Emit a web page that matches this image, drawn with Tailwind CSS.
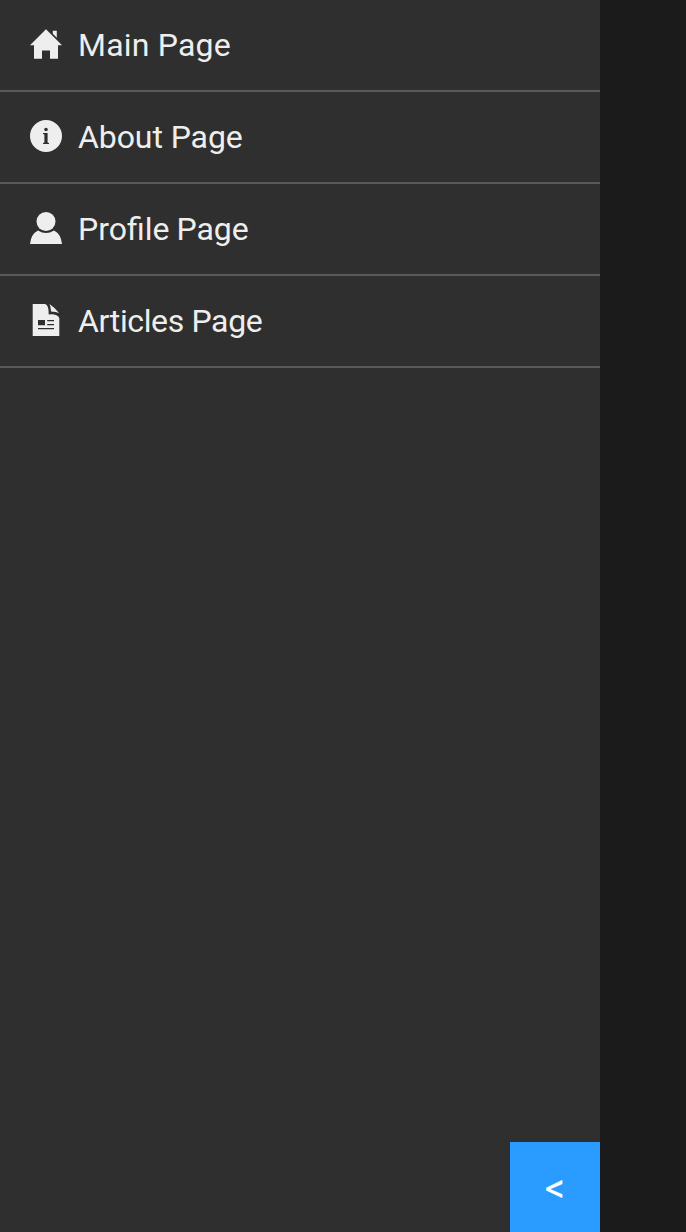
<!DOCTYPE html>
<html lang="en"><head><meta charset="utf-8"><title>Menu</title>
<script src="https://cdn.jsdelivr.net/npm/@tailwindcss/browser@4"></script></head>
<body class="h-screen overflow-hidden bg-[#1b1b1b] font-['Roboto',sans-serif] text-[#eeeeee]">
<aside class="flex h-full w-[600px] flex-col bg-[#2f2f2f]">
<nav class="flex-1 text-[32px] leading-[90px]">
<a class="flex h-[92px] items-center gap-4 border-b-2 border-[#5a5a5a] pl-[30px]"><svg class="mb-0.5 size-8 shrink-0" viewBox="0 0 32 32" fill="currentColor"><path d="M16 1.3 32 17.2H28V30.7H20V22.4H12V30.7H4V17.2H0ZM22.8 2.7H26.8V9.8L22.8 5.8Z"/></svg><span class="tracking-[0.2px]">Main Page</span></a>
<a class="flex h-[92px] items-center gap-4 border-b-2 border-[#5a5a5a] pl-[30px]"><svg class="mb-0.5 size-8 shrink-0" viewBox="0 0 32 32" fill="currentColor"><path fill-rule="evenodd" d="M16 0a16 16 0 1 0 0 32a16 16 0 1 0 0-32ZM16 7.7a1.8 1.8 0 1 1 0 3.6a1.8 1.8 0 1 1 0-3.6ZM13 13h4.6v9.4l1.4.5V24h-6v-1.1l1.4-.5v-7.8l-1.4-.5Z"/></svg><span class="tracking-[-0.08px]">About Page</span></a>
<a class="flex h-[92px] items-center gap-4 border-b-2 border-[#5a5a5a] pl-[30px]"><svg class="mb-0.5 size-8 shrink-0" viewBox="0 0 32 32" fill="currentColor"><circle cx="16" cy="9.5" r="9.5"/><path d="M8 18.5Q16 23.5 24 18.5Q31 22 32 32H0Q1 22 8 18.5Z"/></svg><span class="[word-spacing:-1px]">Profile Page</span></a>
<a class="flex h-[92px] items-center gap-4 border-b-2 border-[#5a5a5a] pl-[30px]"><svg class="mb-0.5 size-8 shrink-0" viewBox="0 0 32 32" fill="currentColor"><path fill-rule="evenodd" d="M2.7 0H15Q19 1 18.7 10.5Q27 9.5 29.3 14V32H2.7ZM8 16v5.3h7V16ZM17.2 16v1.3H24V16ZM17.2 20v1.3H24V20ZM8 24v1.3h16V24Z"/><path d="M19.5 0Q24 3 29 9Q26 7.5 21 7.5Q21 3 19.5 0Z"/></svg><span class="tracking-[-0.36px]">Articles Page</span></a>
</nav>
<button class="size-[90px] self-end bg-[#2a9cff] pt-1 text-[40px] leading-none text-white">&lt;</button>
</aside></body></html>
